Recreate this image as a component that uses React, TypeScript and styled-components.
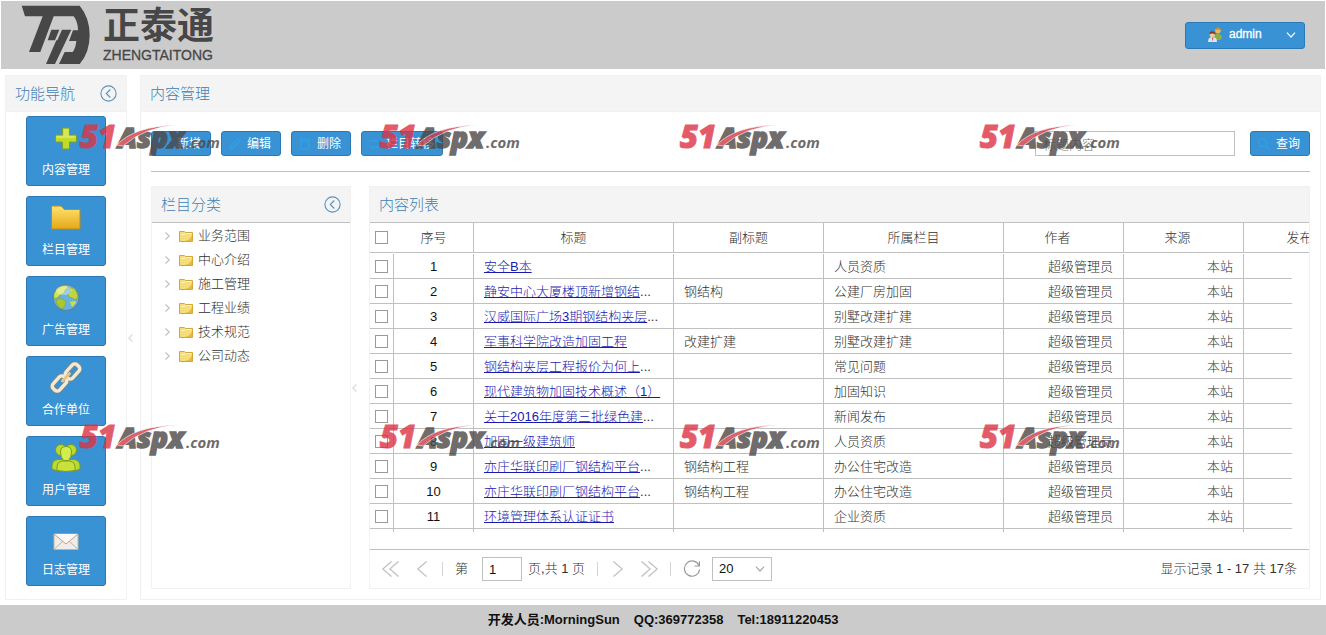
import React from 'react';
import styled, { createGlobalStyle, css } from 'styled-components';

const BLUE = '#3892d3';
const BLUE_EDGE = '#2a79b5';
const TITLE = '#3f80b5';
const LINE = '#c0c0c0';
const FRAME = '#f1f1f1';

const GlobalStyle = createGlobalStyle`
  * { box-sizing: border-box; }
  body {
    margin: 0;
    background: #fff;
    color: #303030;
    font: 300 13px/16px "Liberation Sans", "Noto Sans CJK SC", sans-serif;
  }
  button, input, select { font: inherit; }
`;

const Page = styled.div`
  position: relative;
  display: flex;
  flex-direction: column;
  min-height: 100vh;
`;

const Header = styled.header`
  display: flex;
  align-items: center;
  justify-content: space-between;
  height: 68px;
  margin: 1px 1px 0;
  padding: 0 20px;
  background: #cbcbcb;
`;

const Brand = styled.div`
  display: flex;
  align-items: center;
  gap: 12px;
  color: #474747;
`;

const BrandText = styled.div`
  display: flex;
  flex-direction: column;
`;

const BrandName = styled.span`
  font-size: 37px;
  line-height: 40px;
  font-weight: 700;
`;

const BrandLatin = styled.span`
  font-size: 14px;
  line-height: 16px;
  -webkit-text-stroke: 0.3px #474747;
`;

const buttonBase = css`
  border: 1px solid ${BLUE_EDGE};
  border-radius: 3px;
  background: ${BLUE};
  color: #fff;
  font-size: 12px;
  font-weight: 400;
  cursor: pointer;
`;

const UserButton = styled.button`
  ${buttonBase}
  display: flex;
  align-items: center;
  width: 120px;
  height: 27px;
  padding: 0 8px 0 21px;
  gap: 6px;
  line-height: 14px;
  svg:last-child { margin-left: auto; }
  span {
    padding-bottom: 2px;
    -webkit-text-stroke: 0.3px #fff;
  }
`;

const Workspace = styled.div`
  flex: 1;
  display: flex;
  padding: 6px 5px 5px;
`;

const Panel = styled.section<{ $width?: number }>`
  display: flex;
  flex-direction: column;
  min-width: 0;
  border: 1px solid ${FRAME};
  ${(p) => (p.$width ? `flex: 0 0 ${p.$width}px;` : 'flex: 1;')}
`;

const PanelHead = styled.div<{ $ruled?: boolean }>`
  display: flex;
  align-items: center;
  justify-content: space-between;
  height: 36px;
  padding: 0 9px;
  background: #f4f4f4;
  border-bottom: 1px solid ${(p) => (p.$ruled ? LINE : FRAME)};
`;

const PanelTitle = styled.h2`
  margin: 0;
  font-size: 15px;
  line-height: 20px;
  font-weight: 300;
  color: ${TITLE};
`;

const IconButton = styled.button`
  display: flex;
  padding: 0;
  border: 0;
  background: none;
  color: #c0c0c0;
  cursor: pointer;
`;

const Splitter = styled.div<{ $width: number }>`
  display: flex;
  align-items: center;
  justify-content: flex-start;
  padding-left: 1px;
  flex: 0 0 ${(p) => p.$width}px;
  color: #dcdcdc;
`;

const Nav = styled.nav`
  display: flex;
  flex-direction: column;
  align-items: center;
  gap: 10px;
  padding: 4px 0 12px;
`;

const NavButton = styled.button`
  ${buttonBase}
  display: flex;
  flex-direction: column;
  align-items: center;
  justify-content: space-between;
  width: 80px;
  height: 70px;
  padding: 5px 0 7px;
  line-height: 16px;
`;

const MainBody = styled.div`
  flex: 1;
  display: flex;
  flex-direction: column;
  gap: 14px;
  padding: 19px 10px 10px;
`;

const Toolbar = styled.div`
  display: flex;
  align-items: center;
  gap: 10px;
  padding-bottom: 15px;
  border-bottom: 1px solid ${LINE};
`;

const ToolButton = styled.button`
  ${buttonBase}
  display: flex;
  align-items: center;
  justify-content: center;
  gap: 4px;
  min-width: 60px;
  height: 25px;
  padding: 0 8px 0 4px;
  line-height: 16px;
  svg { color: #2ea0e8; }
`;

const SearchForm = styled.form`
  display: flex;
  gap: 15px;
  margin-left: auto;
`;

const SearchInput = styled.input`
  width: 200px;
  height: 25px;
  padding: 2px 7px 0;
  border: 1px solid ${LINE};
  background: #fff;
  font-size: 13px;
  &::placeholder { color: #777; }
`;

const Columns = styled.div`
  flex: 1;
  display: flex;
`;

const Tree = styled.ul`
  margin: 0;
  padding: 1px 0 0 13px;
  list-style: none;
`;

const TreeItem = styled.li`
  display: flex;
  align-items: center;
  height: 24px;
  color: #c0c0c0;
  svg:first-child { margin-right: 9px; }
  span {
    margin-left: 5px;
    color: #303030;
  }
`;

const TableFrame = styled.div`
  overflow: hidden;
`;

const TableBody = styled.div`
  flex: 1;
  overflow: hidden;
  margin-right: 17px;
  padding: 1px 0 17px;
`;

const Table = styled.table`
  width: 914px;
  table-layout: fixed;
  border-collapse: separate;
  border-spacing: 0;
`;

const Th = styled.th<{ $bare?: boolean; $shift?: boolean }>`
  height: 30px;
  padding: 0 ${(p) => (p.$shift ? 12 : 0)}px 0 0;
  border-right: 1px solid ${(p) => (p.$bare ? 'transparent' : LINE)};
  border-bottom: 1px solid ${LINE};
  font-weight: 300;
  text-align: center;
`;

const Td = styled.td<{ $align?: string }>`
  height: 25px;
  padding: 2px 10px 0;
  border-right: 1px solid ${LINE};
  border-bottom: 1px solid ${LINE};
  text-align: ${(p) => p.$align || 'left'};
  white-space: nowrap;
  overflow: hidden;
`;

const CheckTh = styled(Th)`
  padding: 0;
`;

const CheckTd = styled(Td)`
  padding: 0;
`;

const RowNumber = styled(Td)`
  color: #111;
`;

const TailTd = styled.td`
  height: 3px;
  padding: 0;
  border-right: 1px solid ${LINE};
`;

const Check = styled.input.attrs({ type: 'checkbox' })`
  appearance: none;
  display: block;
  width: 13px;
  height: 13px;
  margin: 0 0 0 5px;
  border: 1px solid #9a9a9a;
  background: #fff;
`;

const TitleLink = styled.a`
  color: #1a1ab0;
`;

const Pager = styled.div`
  display: flex;
  align-items: center;
  height: 39px;
  padding: 0 12px;
  border-top: 1px solid ${LINE};
  white-space: pre;
`;

const Steps = styled.div<{ $side: 'left' | 'right' }>`
  display: flex;
  align-items: center;
  gap: 18px;
  padding-${(p) => p.$side}: 3px;
`;

const Bar = styled.i`
  width: 1px;
  height: 14px;
  margin: 0 12px;
  background: #d4d4d4;
`;

const PageLabel = styled.label`
  display: flex;
  align-items: center;
`;

const PageInput = styled.input`
  width: 40px;
  height: 24px;
  margin: 0 6px 0 14px;
  padding: 0 6px;
  border: 1px solid ${LINE};
  color: #111;
`;

const SizeWrap = styled.div`
  position: relative;
  display: flex;
  align-items: center;
  margin-left: 11px;
  color: #a8a8a8;
  svg {
    position: absolute;
    right: 7px;
    pointer-events: none;
  }
`;

const SizeSelect = styled.select`
  appearance: none;
  width: 60px;
  height: 24px;
  padding: 0 6px;
  border: 1px solid ${LINE};
  border-radius: 0;
  background: #fff;
  color: #111;
`;

const Summary = styled.span`
  margin-left: auto;
`;

const Footer = styled.footer`
  display: flex;
  align-items: center;
  justify-content: center;
  gap: 14px;
  height: 30px;
  background: #cbcbcb;
  color: #111;
  font-weight: 700;
`;

const Mark = styled.svg<{ $col: number; $row: number }>`
  position: absolute;
  left: ${(p) => 80 + p.$col * 300}px;
  top: ${(p) => 120 + p.$row * 300}px;
  width: 144px;
  height: 36px;
  overflow: visible;
  pointer-events: none;
`;

const MarkText = styled.text<{ $size: number; $weight?: number }>`
  font-family: 'Open Sans', sans-serif;
  font-style: italic;
  font-weight: ${(p) => p.$weight || 800};
  font-size: ${(p) => p.$size}px;
`;

function BrandLogo() {
  return (
    <svg width="70" height="60" viewBox="16 12 210 180" fill="#474747" aria-hidden="true">
      <path d="M18 14H192Q222 50 222 102Q222 155 192 189H130L147 153H171Q180 142 182 120H160L172 88H187Q187 62 174 46H114L74 153H40L81 46H28Z" />
      <path d="M107 86H131L118 118H96Z" />
      <path d="M139 86H167L118 189H91L122 118H125Z" />
    </svg>
  );
}

function UserIcon() {
  return (
    <svg width="16" height="16" viewBox="0 0 16 16" aria-hidden="true">
      <path d="M7 12q0-5 4-5t4 4l-2 2H8z" fill="#8fae3c" />
      <circle cx="11" cy="3.6" r="2.8" fill="#e9b765" />
      <path d="M8.200 3Q9 0 11.500.5 14 1 13.800 3.500 11 1.600 8.200 3z" fill="#c98a2b" />
      <path d="M1 15q0-5 4.500-5t4.500 5z" fill="#d9e6f5" />
      <path d="M5 10.500l.5 4 1-4z" fill="#d1442f" />
      <circle cx="5.300" cy="7.500" r="2.700" fill="#f1c9a2" />
      <path d="M2.500 7.500Q2.300 4.300 5.300 4.300T8.200 7.500Q5.500 5.600 2.500 7.500z" fill="#7a3b22" />
    </svg>
  );
}

type ChevronProps = { dir: 'left' | 'right' | 'down'; w?: number; h?: number; double?: boolean };

function Chevron({ dir, w = 8, h = 8, double }: ChevronProps) {
  const common = { fill: 'none', stroke: 'currentColor', strokeWidth: 1.2 };
  if (dir === 'down') {
    return (
      <svg width="10" height="6" viewBox="0 0 10 6" {...common} aria-hidden="true">
        <path d="M1 .7L5 5 9 .7" />
      </svg>
    );
  }
  const reach = double ? w - 7 : w;
  const arm = (x: number) =>
    dir === 'left'
      ? `M${x + reach - 0.5} .5L${x + 0.8} ${h / 2}L${x + reach - 0.5} ${h - 0.5}`
      : `M${x + 0.5} .5L${x + reach - 0.8} ${h / 2}L${x + 0.5} ${h - 0.5}`;
  return (
    <svg width={w} height={h} viewBox={`0 0 ${w} ${h}`} overflow="visible" {...common} aria-hidden="true">
      <path d={double ? arm(0) + arm(7) : arm(0)} />
    </svg>
  );
}

function CollapseIcon() {
  return (
    <svg width="17" height="17" viewBox="0 0 17 17" fill="none" stroke="#5a93c0" strokeWidth="1.100" aria-hidden="true">
      <circle cx="8.500" cy="8.500" r="7.600" />
      <path d="M10.300 4.500l-4 4 4 4" />
    </svg>
  );
}

function RefreshIcon() {
  return (
    <svg width="18" height="18" viewBox="0 0 18 18" fill="none" stroke="#9a9a9a" strokeWidth="1.200" aria-hidden="true">
      <path d="M16 5.500A7.600 7.600 0 1 0 16.600 9.500" />
      <path d="M16.400 1.200V6H11.500" />
    </svg>
  );
}

function TreeFolder() {
  return (
    <svg width="14" height="12" viewBox="0 0 14 12" aria-hidden="true">
      <path d="M.5 1.500h5l1 1h7v9H.5z" fill="#f7dc7a" stroke="#d5a63a" />
      <path d="M2 4.500h4l1-1h5.500" fill="none" stroke="#fff6cf" />
      <path d="M6 11q6-1 7-6v6z" fill="#e5b93f" />
    </svg>
  );
}

const navIcons: Record<string, React.ReactNode> = {
  plus: (
    <>
      <path d="M12.500 6h7v7h7v7h-7v7h-7v-7h-7v-7h7z" fill="#c0dc28" stroke="#7a9f30" />
      <path d="M13.500 7h5v7h7v2h-19v-2h7z" fill="#e3ef7c" opacity=".6" />
    </>
  ),
  folder: (
    <>
      <defs>
        <linearGradient id="folderFill" x1="0" y1="0" x2="0" y2="1">
          <stop offset="0" stopColor="#ffe36e" />
          <stop offset="1" stopColor="#e5a817" />
        </linearGradient>
      </defs>
      <path d="M1.500 4h8.500q2 0 3 2t3 1.500h14V27h-28.500z" fill="url(#folderFill)" stroke="#b98a1c" />
    </>
  ),
  globe: (
    <>
      <circle cx="16" cy="15.500" r="13" fill="#68b2e2" stroke="#5d7f93" />
      <path d="M20 6q4-1 6 3l2 5-2 4-4-2-3-1-1-3 3-2z" fill="#bdd63a" stroke="#7f9f2c" strokeWidth=".6" />
      <path d="M4 12q2-6 8-8l5-.5 1 2.500-3 2-1 3-4 2-3 3-3 .5z" fill="#d3e552" stroke="#7f9f2c" strokeWidth=".6" />
      <path d="M7 17l4-.5 5 3-1 4-3 3.500q-5-2-6-7z" fill="#a9c832" stroke="#7f9f2c" strokeWidth=".6" />
      <path d="M20 20l5-1 1 2-4 4z" fill="#cde04a" />
      <ellipse cx="14" cy="8.500" rx="8" ry="4.500" fill="#fff" opacity=".35" />
    </>
  ),
  link: (
    <g fill="none" strokeLinejoin="round">
      <g stroke="#8b8778" strokeWidth="5">
        <rect x="14.500" y="5" width="16" height="9" rx="3.500" transform="rotate(-48 22.500 9.500)" />
        <rect x="1.500" y="17" width="16" height="9" rx="3.500" transform="rotate(-48 9.500 21.500)" />
      </g>
      <g stroke="#f0ead6" strokeWidth="3.400">
        <rect x="14.500" y="5" width="16" height="9" rx="3.500" transform="rotate(-48 22.500 9.500)" />
        <rect x="1.500" y="17" width="16" height="9" rx="3.500" transform="rotate(-48 9.500 21.500)" />
      </g>
      <path d="M12.500 19l7-7.500" stroke="#e6c58a" strokeWidth="3" strokeLinecap="round" />
    </g>
  ),
  users: (
    <g fill="#bcd930" stroke="#7a9c24">
      <circle cx="11" cy="8" r="5.500" />
      <circle cx="21" cy="8" r="5.500" />
      <path d="M2 27q-1-9 6-9.500h16q7 .5 6 9.500l-4 1.500H6z" />
      <path d="M7 28.500q-1-8.500 5-9.500h8q6 1 5 9.500-9 2-18 0z" fill="#c8e23c" />
      <path d="M10.500 10q0-5.500 5.500-5.500t5.500 5.500-3 8.500h-5q-3-3-3-8.500z" fill="#d3ec4e" />
    </g>
  ),
  mail: (
    <g stroke="#bdb4a8">
      <path d="M4 12h24v15.500H4z" fill="#f0ece8" />
      <path d="M4.500 27l8.500-8m14.500 8L19 19" fill="none" />
      <path d="M4 12l12 10 12-10" fill="#faf8f6" stroke="#c79f86" />
    </g>
  ),
};

function NavIcon({ name }: { name: string }) {
  return (
    <svg width="32" height="32" viewBox="0 0 32 32" aria-hidden="true">
      {navIcons[name]}
    </svg>
  );
}

function ToolIcon({ name }: { name: 'add' | 'edit' | 'remove' | 'move' | 'search' }) {
  const paths = {
    add: 'M8 3v10M3 8h10',
    edit: 'M3 13l1-3 7-7 2 2-7 7z',
    remove: 'M4 5h8v8H4zM3 3h10',
    move: 'M3 5h8l-2-2M13 11H5l2 2',
    search: 'M6.500 2.500a4 4 0 1 0 .1 0M9.500 9.500L14 14',
  };
  return (
    <svg width="16" height="16" viewBox="0 0 16 16" fill="none" stroke="currentColor" strokeWidth="1.500" aria-hidden="true">
      <path d={paths[name]} />
    </svg>
  );
}

function Watermark({ col, row }: { col: number; row: number }) {
  return (
    <Mark $col={col} $row={row} viewBox="0 0 144 36" opacity="0.8" aria-hidden="true">
      <MarkText $size={31} x="0" y="28" fill="#dd3344" stroke="#dd3344" strokeWidth="1">51</MarkText>
      <MarkText $size={28} x="38" y="28" fill="#4d4848" stroke="#4d4848" strokeWidth="1.500">Aspx</MarkText>
      <MarkText $size={15} $weight={700} x="106" y="28" fill="#4d4848">.com</MarkText>
      <path d="M37 25Q54 6 98 5Q64 7 43 26Z" fill="#cf3a45" stroke="#fff" strokeWidth=".6" />
    </Mark>
  );
}

const navItems = [
  ['plus', '内容管理'],
  ['folder', '栏目管理'],
  ['globe', '广告管理'],
  ['link', '合作单位'],
  ['users', '用户管理'],
  ['mail', '日志管理'],
];

const categories = ['业务范围', '中心介绍', '施工管理', '工程业绩', '技术规范', '公司动态'];

type Row = { title: string; cut?: boolean; sub?: string; category: string };

const rows: Row[] = [
  { title: '安全B本', category: '人员资质' },
  { title: '静安中心大厦楼顶新增钢结', cut: true, sub: '钢结构', category: '公建厂房加固' },
  { title: '汉威国际广场3期钢结构夹层', cut: true, category: '别墅改建扩建' },
  { title: '军事科学院改造加固工程', sub: '改建扩建', category: '别墅改建扩建' },
  { title: '钢结构夹层工程报价为何上', cut: true, category: '常见问题' },
  { title: '现代建筑物加固技术概述（1）', category: '加固知识' },
  { title: '关于2016年度第三批绿色建', cut: true, category: '新闻发布' },
  { title: '加固一级建筑师', category: '人员资质' },
  { title: '亦庄华联印刷厂钢结构平台', cut: true, sub: '钢结构工程', category: '办公住宅改造' },
  { title: '亦庄华联印刷厂钢结构平台', cut: true, sub: '钢结构工程', category: '办公住宅改造' },
  { title: '环境管理体系认证证书', category: '企业资质' },
];

const columnWidths = [24, 80, 200, 150, 180, 120, 120, 150];

function Cols() {
  return (
    <colgroup>
      {columnWidths.map((width, i) => (
        <col key={i} style={{ width }} />
      ))}
    </colgroup>
  );
}

function ContentGrid() {
  return (
    <>
      <TableFrame>
        <Table>
          <Cols />
          <thead>
            <tr>
              <CheckTh $bare><Check aria-label="全选" /></CheckTh>
              <Th>序号</Th>
              <Th>标题</Th>
              <Th>副标题</Th>
              <Th>所属栏目</Th>
              <Th $shift>作者</Th>
              <Th $shift>来源</Th>
              <Th $shift>发布日期</Th>
            </tr>
          </thead>
        </Table>
      </TableFrame>
      <TableBody>
        <Table>
          <Cols />
          <tbody>
            {rows.map((row, i) => (
              <tr key={i}>
                <CheckTd><Check aria-label={row.title} /></CheckTd>
                <RowNumber $align="center">{i + 1}</RowNumber>
                <Td><TitleLink href="#">{row.title}</TitleLink>{row.cut && '...'}</Td>
                <Td>{row.sub}</Td>
                <Td>{row.category}</Td>
                <Td $align="right">超级管理员</Td>
                <Td $align="right">本站</Td>
                <Td />
              </tr>
            ))}
            <tr>
              {columnWidths.map((_, i) => (
                <TailTd key={i} />
              ))}
            </tr>
          </tbody>
        </Table>
      </TableBody>
    </>
  );
}

export default function App() {
  return (
    <>
      <GlobalStyle />
      <Page>
        <Header>
          <Brand>
            <BrandLogo />
            <BrandText>
              <BrandName>正泰通</BrandName>
              <BrandLatin>ZHENGTAITONG</BrandLatin>
            </BrandText>
          </Brand>
          <UserButton type="button">
            <UserIcon />
            <span>admin</span>
            <Chevron dir="down" />
          </UserButton>
        </Header>

        <Workspace>
          <Panel $width={122}>
            <PanelHead>
              <PanelTitle>功能导航</PanelTitle>
              <IconButton type="button" aria-label="收起"><CollapseIcon /></IconButton>
            </PanelHead>
            <Nav>
              {navItems.map(([icon, label]) => (
                <NavButton type="button" key={label}>
                  <NavIcon name={icon} />
                  {label}
                </NavButton>
              ))}
            </Nav>
          </Panel>
          <Splitter $width={13}><Chevron dir="left" w={5} h={8} /></Splitter>

          <Panel>
            <PanelHead>
              <PanelTitle>内容管理</PanelTitle>
            </PanelHead>
            <MainBody>
              <Toolbar>
                <ToolButton type="button"><ToolIcon name="add" />新增</ToolButton>
                <ToolButton type="button"><ToolIcon name="edit" />编辑</ToolButton>
                <ToolButton type="button"><ToolIcon name="remove" />删除</ToolButton>
                <ToolButton type="button"><ToolIcon name="move" />栏目转移</ToolButton>
                <SearchForm>
                  <SearchInput aria-label="标题内容" placeholder="标题内容" />
                  <ToolButton type="button"><ToolIcon name="search" />查询</ToolButton>
                </SearchForm>
              </Toolbar>
              <Columns>
                <Panel $width={200}>
                  <PanelHead $ruled>
                    <PanelTitle>栏目分类</PanelTitle>
                    <IconButton type="button" aria-label="收起"><CollapseIcon /></IconButton>
                  </PanelHead>
                  <Tree>
                    {categories.map((name) => (
                      <TreeItem key={name}>
                        <Chevron dir="right" w={5} h={8} />
                        <TreeFolder />
                        <span>{name}</span>
                      </TreeItem>
                    ))}
                  </Tree>
                </Panel>
                <Splitter $width={18}><Chevron dir="left" w={5} h={8} /></Splitter>
                <Panel>
                  <PanelHead $ruled>
                    <PanelTitle>内容列表</PanelTitle>
                  </PanelHead>
                  <ContentGrid />
                  <Pager>
                    <Steps $side="right">
                      <IconButton type="button" aria-label="首页"><Chevron dir="left" w={17} h={16} double /></IconButton>
                      <IconButton type="button" aria-label="上一页"><Chevron dir="left" w={10} h={16} /></IconButton>
                    </Steps>
                    <Bar />
                    <PageLabel>
                      第
                      <PageInput defaultValue="1" />
                      页,共 1 页
                    </PageLabel>
                    <Bar />
                    <Steps $side="left">
                      <IconButton type="button" aria-label="下一页"><Chevron dir="right" w={10} h={16} /></IconButton>
                      <IconButton type="button" aria-label="末页"><Chevron dir="right" w={17} h={16} double /></IconButton>
                    </Steps>
                    <Bar />
                    <IconButton type="button" aria-label="刷新"><RefreshIcon /></IconButton>
                    <SizeWrap>
                      <SizeSelect aria-label="每页条数" defaultValue="20">
                        <option>20</option>
                        <option>50</option>
                      </SizeSelect>
                      <Chevron dir="down" />
                    </SizeWrap>
                    <Summary>显示记录 1 - 17 共 17条</Summary>
                  </Pager>
                </Panel>
              </Columns>
            </MainBody>
          </Panel>
        </Workspace>

        <Footer>
          <span>开发人员:MorningSun</span>
          <span>QQ:369772358</span>
          <span>Tel:18911220453</span>
        </Footer>

        {[0, 1].map((row) =>
          [0, 1, 2, 3].map((col) => <Watermark key={`${row}-${col}`} row={row} col={col} />),
        )}
      </Page>
    </>
  );
}
